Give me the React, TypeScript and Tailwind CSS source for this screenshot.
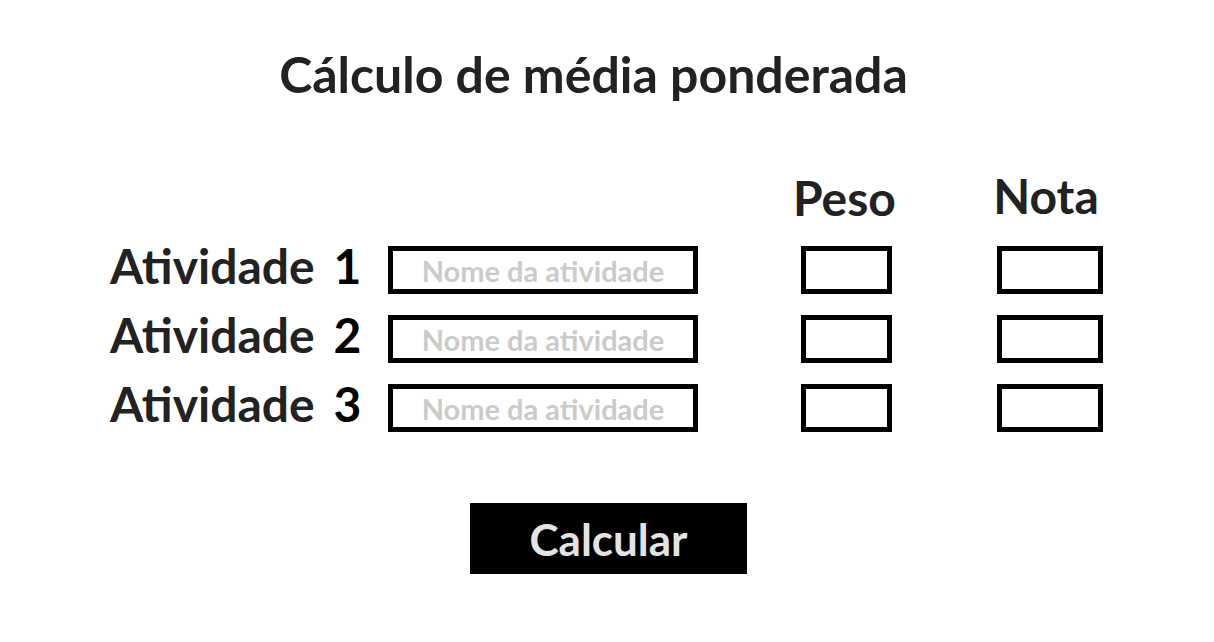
import React from 'react'

const rows = [1, 2, 3]

const font = { fontFamily: 'Lato, "Open Sans", sans-serif' }

const App: React.FC = () => {
  return (
    <div className="w-[1214px] h-[642px] bg-white text-[#222]" style={font}>
      <h1 className="pt-[49px] pr-[27px] text-center text-[50px] font-bold leading-none">
        Cálculo de média ponderada
      </h1>

      <div className="pl-[110px] mt-[74px]">
        {/* column headers */}
        <div className="flex items-end h-[44px] text-[48px] font-bold leading-none">
          <div className="w-[690px]" />
          <span className="w-[91px] text-center whitespace-nowrap translate-y-[5px] -translate-x-[7px]">Peso</span>
          <div className="w-[105px]" />
          <span className="w-[106px] text-center whitespace-nowrap translate-y-[3px] -translate-x-[3px]">Nota</span>
        </div>

        <div className="mt-[29px] flex flex-col gap-[21px]">
          {rows.map((n) => (
            <div key={n} className="flex items-center h-[48px]">
              <label className="w-[278px] text-[48px] font-bold leading-none -mt-[9px] whitespace-nowrap">
                Atividade <span className="ml-[7px] text-black">{n}</span>
              </label>
              <input
                placeholder="Nome da atividade"
                className="w-[310px] h-[48px] border-[5px] border-black text-center text-[29px] font-bold outline-none placeholder:text-[#cbcbcb]"
                style={font}
              />
              <div className="w-[103px]" />
              <input className="w-[91px] h-[48px] border-[5px] border-black outline-none" />
              <div className="w-[105px]" />
              <input className="w-[106px] h-[48px] border-[5px] border-black outline-none" />
            </div>
          ))}
        </div>
      </div>

      <div className="mt-[71px] flex justify-center">
        <button className="ml-[3px] w-[277px] h-[71px] bg-black text-[#e3e3e3] text-[44px] font-bold leading-none" style={font}>
          Calcular
        </button>
      </div>
    </div>
  )
}

export default App
